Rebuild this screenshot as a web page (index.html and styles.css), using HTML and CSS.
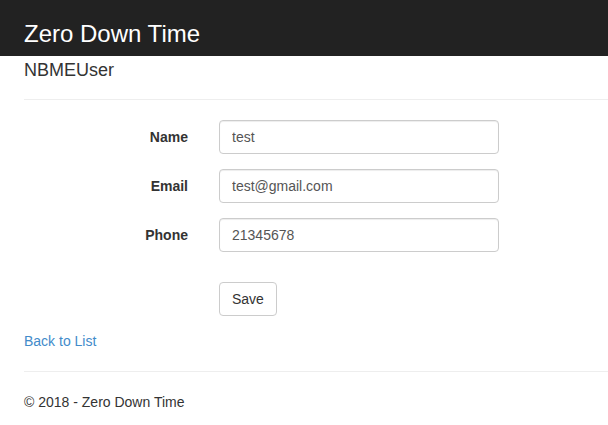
FILE: index.html
```html
<!DOCTYPE html>
<html lang="en">
<head>
<meta charset="utf-8">
<title>Edit - Zero Down Time</title>
<link rel="stylesheet" href="styles.css">
</head>
<body>
<header class="navbar">
  <a class="brand" href="#">Zero Down Time</a>
</header>
<main class="content">
  <h4 class="entity">NBMEUser</h4>
  <hr class="rule">
  <form class="form">
    <label class="label" for="name">Name</label>
    <input class="input" id="name" type="text" value="test">
    <label class="label" for="email">Email</label>
    <input class="input" id="email" type="text" value="test@gmail.com">
    <label class="label" for="phone">Phone</label>
    <input class="input" id="phone" type="text" value="21345678">
    <div class="actions">
      <button class="btn" type="button">Save</button>
    </div>
  </form>
  <div class="back"><a class="link" href="#">Back to List</a></div>
  <hr class="rule rule-footer">
  <footer class="footer">
    <p class="copy">&copy; 2018 - Zero Down Time</p>
  </footer>
</main>
</body>
</html>
```

FILE: styles.css
```css
* { box-sizing: border-box; }
html, body { margin: 0; padding: 0; }
body {
  font-family: "Liberation Sans", Arial, sans-serif;
  font-size: 14px;
  line-height: 20px;
  color: #333;
  background: #fff;
}
.navbar {
  background: #222;
  height: 56px;
  padding: 22px 24px 10px;
}
.brand {
  display: block;
  color: #fff;
  text-decoration: none;
  font-size: 24px;
  line-height: 24px;
}
.content {
  padding: 0 0 0 24px;
}
.entity {
  margin: 4px 0 0;
  font-size: 18px;
  line-height: 20px;
  font-weight: 400;
  color: #333;
}
.rule {
  border: 0;
  border-top: 1px solid #eee;
  margin: 19px 0 0;
  height: 0;
}
.form {
  display: grid;
  grid-template-columns: 164px 280px;
  column-gap: 31px;
  row-gap: 15px;
  margin-top: 20px;
}
.label {
  text-align: right;
  font-weight: 700;
  padding-top: 7px;
  color: #333;
}
.input {
  height: 34px;
  padding: 6px 12px;
  font-family: inherit;
  font-size: 14px;
  line-height: 20px;
  color: #555;
  background: #fff;
  border: 1px solid #ccc;
  border-radius: 4px;
  box-shadow: inset 0 1px 1px rgba(0,0,0,.075);
  width: 280px;
}
.actions {
  grid-column: 2;
  margin-top: 15px;
}
.btn {
  height: 34px;
  padding: 6px 12px;
  font-family: inherit;
  font-size: 14px;
  line-height: 20px;
  color: #333;
  background: #fff;
  border: 1px solid #ccc;
  border-radius: 4px;
  cursor: pointer;
}
.back {
  margin-top: 15px;
}
.link {
  color: #428bca;
  text-decoration: none;
}
.rule-footer {
  margin-top: 20px;
}
.footer { margin-top: 20px; }
.copy { margin: 0; }
```
